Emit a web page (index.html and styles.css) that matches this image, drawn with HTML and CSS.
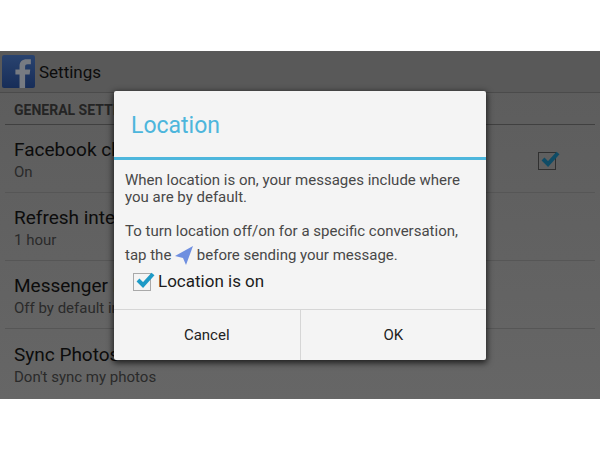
FILE: index.html
```
<!DOCTYPE html>
<html lang="en">

<head>
    <meta charset="UTF-8">
    <title>Settings</title>
    <link rel="stylesheet" href="styles.css">
</head>

<body>
    <div class="screen">
        <header class="bar">
            <svg class="logo" viewBox="0 0 32 32" aria-hidden="true">
                <defs>
                    <linearGradient id="logoBlue" x1="0" y1="0" x2="0" y2="1">
                        <stop offset="0" stop-color="#29436f" />
                        <stop offset="1" stop-color="#172d58" />
                    </linearGradient>
                </defs>
                <rect width="32" height="32" rx="2" fill="url(#logoBlue)" />
                <path fill="#777b82"
                    d="M17 32V19h-4v-5h4v-3c0-5 2.600-7 7-7h4v5h-3c-2 0-2.600.8-2.600 2.400V14h5l-.6 5h-4.400v13z" />
            </svg>
            <h1>Settings</h1>
        </header>

        <main class="settings">
            <h2>General settings</h2>
            <ul>
                <li>
                    <label for="chat">
                        <span class="name">Facebook chat</span>
                        <span class="value">On</span>
                    </label>
                    <span class="check dim">
                        <input type="checkbox" id="chat" checked>
                        <svg viewBox="0 0 22 20" aria-hidden="true">
                            <path d="M5 9l5 5L20 3" />
                        </svg>
                    </span>
                </li>
                <li>
                    <div>
                        <span class="name">Refresh interval</span>
                        <span class="value">1 hour</span>
                    </div>
                </li>
                <li>
                    <div>
                        <span class="name">Messenger location</span>
                        <span class="value">Off by default in new messages</span>
                    </div>
                </li>
                <li>
                    <div>
                        <span class="name">Sync Photos</span>
                        <span class="value">Don't sync my photos</span>
                    </div>
                </li>
            </ul>
        </main>

        <div class="overlay">
            <section class="dialog" role="dialog" aria-labelledby="title">
                <h2 id="title">Location</h2>
                <div class="content">
                    <p>When location is on, your messages include where you are by default.</p>
                    <p class="hint">To turn location off/on for a specific conversation, tap the
                        <svg class="arrow" viewBox="0 0 18 19" aria-hidden="true">
                            <path d="M18 0L0 10l8 2 3 7z" />
                        </svg>
                        before sending your message.
                    </p>
                    <div class="option">
                        <span class="check">
                            <input type="checkbox" id="location" checked>
                            <svg viewBox="0 0 22 20" aria-hidden="true">
                                <path d="M5 9l5 5L20 3" />
                            </svg>
                        </span>
                        <label for="location">Location is on</label>
                    </div>
                </div>
                <div class="buttons">
                    <button type="button">Cancel</button>
                    <button type="button">OK</button>
                </div>
            </section>
        </div>
    </div>
</body>

</html>
```
FILE: styles.css
```
* {
    box-sizing: border-box;
}

body {
    margin: 0;
    padding: 51px 0;
    background-color: #fff;
    font-family: Roboto, "Liberation Sans", sans-serif;
}

h1,
h2,
p,
ul {
    margin: 0;
    padding: 0;
}

.screen {
    position: relative;
    background: linear-gradient(#5c5c5c, #666);
    color: #0c0c0c;
}

.bar {
    display: flex;
    align-items: center;
    gap: 4px;
    height: 42px;
    padding-left: 2px;
    background-color: #595959;
    border-bottom: 1px solid #4b4b4b;
}

.logo {
    width: 33px;
    height: 33px;
}

.bar h1 {
    font-size: 17px;
    font-weight: 400;
}

.settings {
    padding: 0 5px 2px;
}

.settings h2 {
    height: 32px;
    padding-left: 9px;
    border-bottom: 1px solid #404040;
    color: #242424;
    font-size: 14px;
    font-weight: 700;
    line-height: 34px;
    text-transform: uppercase;
}

.settings li {
    display: flex;
    align-items: center;
    justify-content: space-between;
    height: 68px;
    padding: 3px 35px 0 9px;
    border-bottom: 1px solid #565656;
}

.settings li:last-child {
    border-bottom: none;
}

.name,
.value {
    display: block;
}

.name {
    font-size: 19px;
    line-height: 24px;
}

.value {
    color: #2a2a2a;
    font-size: 15px;
    line-height: 20px;
}

/* Holo style checkbox, the tick sticks out of the box */
.check {
    display: grid;
    width: 22px;
    height: 20px;
}

.check input,
.check svg {
    grid-area: 1 / 1;
}

.check input {
    appearance: none;
    align-self: end;
    width: 18px;
    height: 18px;
    margin: 0;
    border: 1px solid #a9a9a9;
}

.check svg {
    width: 22px;
    height: 20px;
    fill: none;
    stroke: #1d9ac6;
    stroke-width: 4;
    pointer-events: none;
}

.check input:not(:checked) + svg {
    display: none;
}

.dim input {
    border-color: #303030;
}

.dim svg {
    stroke: #0f4c66;
}

.overlay {
    position: absolute;
    inset: 0;
    display: flex;
    align-items: center;
    justify-content: center;
}

.dialog {
    width: 62%;
    background-color: #f4f4f4;
    border-radius: 2px;
    box-shadow: 0 2px 6px 1px rgba(0, 0, 0, 0.7);
}

.dialog h2 {
    padding: 4px 17px 0;
    border-bottom: 3px solid #4db6dc;
    color: #4db6dc;
    font-size: 23px;
    font-weight: 400;
    line-height: 62px;
}

.content {
    padding: 12px 18px 18px 11px;
    color: #484848;
    font-size: 15px;
    line-height: 17px;
}

.hint {
    margin-top: 13px;
    line-height: 24px;
}

.arrow {
    width: 18px;
    height: 19px;
    fill: #6f8fe0;
    vertical-align: middle;
}

.option {
    display: flex;
    align-items: center;
    gap: 3px;
    padding: 4px 0 0 8px;
    color: #1c1c1c;
    font-size: 17px;
    line-height: 20px;
}

.buttons {
    display: flex;
    border-top: 1px solid #d6d6d6;
}

.buttons button {
    flex: 1;
    height: 50px;
    border: none;
    background: none;
    color: #222;
    font: inherit;
    font-size: 15px;
}

.buttons button + button {
    border-left: 1px solid #d6d6d6;
}
```
